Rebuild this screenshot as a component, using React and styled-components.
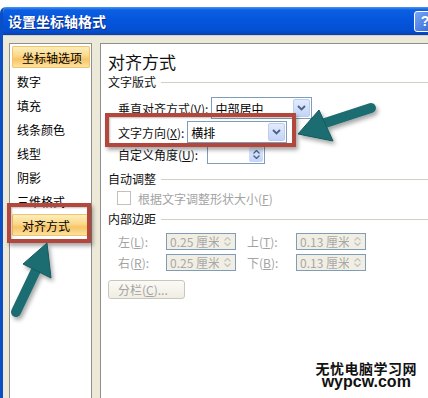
import React from "react";
import styled, { createGlobalStyle } from "styled-components";

const Global = createGlobalStyle`
  html, body { margin: 0; padding: 0; background: #fff; }
  body { font-family: "Noto Sans CJK SC", "Liberation Sans", sans-serif; }
`;

const Root = styled.div`
  position: relative;
  width: 428px;
  height: 398px;
  overflow: hidden;
  background: #fff;
  display: flex;
  flex-direction: column;
`;

const TopStrip = styled.div`
  height: 7px;
  flex: none;
`;

const Window = styled.div`
  flex: 1;
  display: flex;
  flex-direction: column;
  border-left: 3px solid #0b4fc6;
  border-top-left-radius: 6px;
  overflow: hidden;
`;

const TitleBar = styled.div`
  height: 28px;
  flex: none;
  display: flex;
  align-items: center;
  justify-content: space-between;
  padding-left: 5px;
  background: linear-gradient(#4a95f6 0, #0c5fe2 3px, #0556dc 45%, #044fd2 85%, #0a3fae 100%);
`;

const Title = styled.div`
  color: #fff;
  font-size: 14px;
  font-weight: bold;
  text-shadow: 1px 1px 0 #0a2a80;
`;

const HelpButton = styled.div`
  width: 20px;
  height: 19px;
  margin-right: -8px;
  border: 1px solid #fff;
  border-radius: 3px;
  background: linear-gradient(135deg, #78a6f5, #2d63d8);
  color: #fff;
  font: bold 14px "Liberation Sans", sans-serif;
  display: flex;
  align-items: center;
  justify-content: center;
`;

const Body = styled.div`
  flex: 1;
  display: flex;
  gap: 8px;
  padding: 7px 0 0 6px;
  background: #ece9d8;
  border-top: 1px solid #d6d2c2;
`;

const Nav = styled.div`
  width: 78px;
  flex: none;
  background: #fff;
  border: 1px solid #8f8f8f;
  border-bottom: none;
  padding: 2px 1px 0 2px;
`;

const NavItem = styled.div`
  height: 22px;
  margin-bottom: 2px;
  display: flex;
  align-items: center;
  padding-left: ${(p) => (p.$active ? 10 : 5)}px;
  font-size: 12px;
  color: #000;
  border-radius: 2px;
  background: ${(p) =>
    p.$active
      ? "linear-gradient(#fdf0c2 0%, #fbd88a 45%, #f8c467 60%, #fde6a8 100%)"
      : "transparent"};
  box-shadow: ${(p) => (p.$active ? "inset 0 0 0 1px #f0c36d" : "none")};
`;

const Pane = styled.div`
  flex: 1;
  background: #fff;
  border-left: 1px solid #8f8f8f;
  border-top: 1px solid #8f8f8f;
  padding: 5px 0 0 7px;
  display: flex;
  flex-direction: column;
`;

const Heading = styled.div`
  font-size: 17px;
  line-height: 25px;
  height: 25px;
  color: #111;
`;

const Section = styled.div`
  display: flex;
  align-items: center;
  gap: 5px;
  height: 16px;
  line-height: 16px;
  font-size: 12px;
  color: #111;
  margin-top: ${(p) => p.$mt || 0}px;
  &::after {
    content: "";
    flex: 1;
    height: 1px;
    background: #d3d0c0;
  }
`;

const Row = styled.div`
  display: flex;
  align-items: center;
  height: ${(p) => p.$h || 22}px;
  margin-top: ${(p) => p.$mt || 0}px;
  padding-left: ${(p) => (p.$pl === undefined ? 10 : p.$pl)}px;
  font-size: 12px;
  color: ${(p) => (p.$disabled ? "#a3a3a3" : "#111")};
`;

const Label = styled.span`
  white-space: nowrap;
  width: ${(p) => (p.$w ? p.$w + "px" : "auto")};
  margin-right: ${(p) => p.$mr || 3}px;
  flex: none;
`;

const Select = styled.div`
  display: flex;
  align-items: center;
  width: ${(p) => p.$w}px;
  height: ${(p) => p.$h}px;
  box-sizing: border-box;
  border: 1px solid #7f9db9;
  background: ${(p) => (p.$disabled ? "#f1efe3" : "#fff")};
  flex: none;
`;

const Value = styled.div`
  flex: 1;
  overflow: hidden;
  white-space: nowrap;
  padding-left: 3px;
  font-size: 12px;
  color: ${(p) => (p.$disabled ? "#a8a8a8" : "#000")};
`;

const DropButton = styled.div`
  width: 17px;
  align-self: stretch;
  margin: 1px;
  box-sizing: border-box;
  border: 1px solid #bccdf2;
  border-radius: 2px;
  background: linear-gradient(#e2ebfd, #c3d4f7);
  display: flex;
  flex-direction: column;
  align-items: center;
  justify-content: center;
`;

const SpinButton = styled.div`
  width: 14px;
  align-self: stretch;
  margin: 1px;
  display: flex;
  flex-direction: column;
  align-items: center;
  justify-content: center;
  gap: 1px;
  background: ${(p) => (p.$disabled ? "#f1efe3" : "linear-gradient(#e2ebfd, #c3d4f7)")};
  border-radius: 2px;
`;

const CheckBox = styled.div`
  width: 12px;
  height: 12px;
  border: 1px solid #c2c2b8;
  margin-right: 7px;
  flex: none;
`;

const Gap = styled.span`
  display: inline-block;
  width: ${(p) => p.$w}px;
  flex: none;
`;

const PushButton = styled.div`
  margin-top: 9px;
  width: 77px;
  height: 19px;
  box-sizing: border-box;
  border: 1px solid #c9c7ba;
  border-radius: 3px;
  background: linear-gradient(#fbfaf6, #efede3);
  font-size: 12px;
  color: #a3a3a3;
  display: flex;
  align-items: center;
  padding-left: 9px;
`;

const Callout = styled.div`
  position: absolute;
  left: ${(p) => p.$x}px;
  top: ${(p) => p.$y}px;
  width: ${(p) => p.$w}px;
  height: ${(p) => p.$h}px;
  box-sizing: border-box;
  border: 4px solid #b4473b;
  box-shadow: 2px 3px 4px rgba(0, 0, 0, 0.35), inset 1px 1px 2px rgba(0, 0, 0, 0.25);
  pointer-events: none;
`;

const Overlay = styled.svg`
  position: absolute;
  left: 0;
  top: 0;
  pointer-events: none;
`;

const Watermark = styled.div`
  position: absolute;
  right: 11px;
  bottom: 9px;
  display: flex;
  flex-direction: column;
  align-items: center;
  color: #111;
  font-weight: bold;
`;

const MarkCn = styled.div`
  font-size: 14px;
  line-height: 14px;
  letter-spacing: 0.5px;
  font-family: "Noto Sans CJK SC", sans-serif;
`;

const MarkEn = styled.div`
  font-size: 16px;
  line-height: 14px;
  font-family: "Liberation Sans", Arial, sans-serif;
`;

const Chevron = () => (
  <svg width="9" height="6" viewBox="0 0 9 6">
    <path d="M1 1 L4.5 4.5 L8 1" fill="none" stroke="#4d6185" strokeWidth="1.8" />
  </svg>
);

const Spin = ({ color = "#4d6185" }) => (
  <>
    <svg width="7" height="4" viewBox="0 0 7 4">
      <path d="M0.5 3.5 L3.5 0.5 L6.5 3.5" fill="none" stroke={color} strokeWidth="1.3" />
    </svg>
    <svg width="7" height="4" viewBox="0 0 7 4">
      <path d="M0.5 0.5 L3.5 3.5 L6.5 0.5" fill="none" stroke={color} strokeWidth="1.3" />
    </svg>
  </>
);

const navItems = ["坐标轴选项", "数字", "填充", "线条颜色", "线型", "阴影", "三维格式", "对齐方式"];

const MarginBox = ({ value }) => (
  <Select $w={70} $h={17} $disabled>
    <Value $disabled>{value}</Value>
    <SpinButton $disabled>
      <Spin color="#c4c4c4" />
    </SpinButton>
  </Select>
);

export default function App() {
  return (
    <Root>
      <Global />
      <TopStrip />
      <Window>
        <TitleBar>
          <Title>设置坐标轴格式</Title>
          <HelpButton>?</HelpButton>
        </TitleBar>
        <Body>
          <Nav>
            {navItems.map((t, i) => (
              <NavItem key={t} $active={i === 0 || i === 7}>
                {t}
              </NavItem>
            ))}
          </Nav>
          <Pane>
            <Heading>对齐方式</Heading>
            <Section>文字版式</Section>
            <Row $mt={7} $h={22}>
              <Label>
                垂直对齐方式(<u>V</u>):
              </Label>
              <Select $w={101} $h={22}>
                <Value>中部居中</Value>
                <DropButton>
                  <Chevron />
                </DropButton>
              </Select>
            </Row>
            <Row $mt={2} $h={22}>
              <Label>
                文字方向(<u>X</u>):
              </Label>
              <Select $w={100} $h={22}>
                <Value>横排</Value>
                <DropButton>
                  <Chevron />
                </DropButton>
              </Select>
            </Row>
            <Row $mt={2} $h={19}>
              <Label $mr={9}>
                自定义角度(<u>U</u>):
              </Label>
              <Select $w={58} $h={19}>
                <Value />
                <SpinButton>
                  <Spin />
                </SpinButton>
              </Select>
            </Row>
            <Section $mt={7}>自动调整</Section>
            <Row $mt={3} $h={16} $pl={9} $disabled>
              <CheckBox />
              根据文字调整形状大小(<u>F</u>)
            </Row>
            <Section $mt={5}>内部边距</Section>
            <Row $mt={6} $h={17} $disabled>
              <Label $w={45} $mr={0}>
                左(<u>L</u>):
              </Label>
              <MarginBox value="0.25 厘米" />
              <Gap $w={11} />
              <Label $w={46} $mr={0}>
                上(<u>T</u>):
              </Label>
              <MarginBox value="0.13 厘米" />
            </Row>
            <Row $mt={4} $h={17} $disabled>
              <Label $w={45} $mr={0}>
                右(<u>R</u>):
              </Label>
              <MarginBox value="0.25 厘米" />
              <Gap $w={11} />
              <Label $w={46} $mr={0}>
                下(<u>B</u>):
              </Label>
              <MarginBox value="0.13 厘米" />
            </Row>
            <PushButton>
              分栏(<u>C</u>)...
            </PushButton>
          </Pane>
        </Body>
      </Window>

      <Callout $x={105} $y={113} $w={191} $h={34} />
      <Callout $x={7} $y={203} $w={84} $h={40} />

      <Overlay width="428" height="398" viewBox="0 0 428 398">
        <defs>
          <filter id="sh" x="-20%" y="-20%" width="140%" height="140%">
            <feDropShadow dx="2" dy="3" stdDeviation="2" floodColor="#000" floodOpacity="0.35" />
          </filter>
        </defs>
        <g filter="url(#sh)" fill="#1f6d72" stroke="#17585c" strokeWidth="1">
          <line x1="371" y1="108" x2="322" y2="124" stroke="#1f6d72" strokeWidth="10" strokeLinecap="round" />
          <polygon points="298,134 319,110 333,141" />
          <line x1="16" y1="312" x2="38" y2="266" stroke="#1f6d72" strokeWidth="10" strokeLinecap="round" />
          <polygon points="47,243 23,264 51,278" />
        </g>
      </Overlay>

      <Watermark>
        <MarkCn>无忧电脑学习网</MarkCn>
        <MarkEn>wypcw.com</MarkEn>
      </Watermark>
    </Root>
  );
}
